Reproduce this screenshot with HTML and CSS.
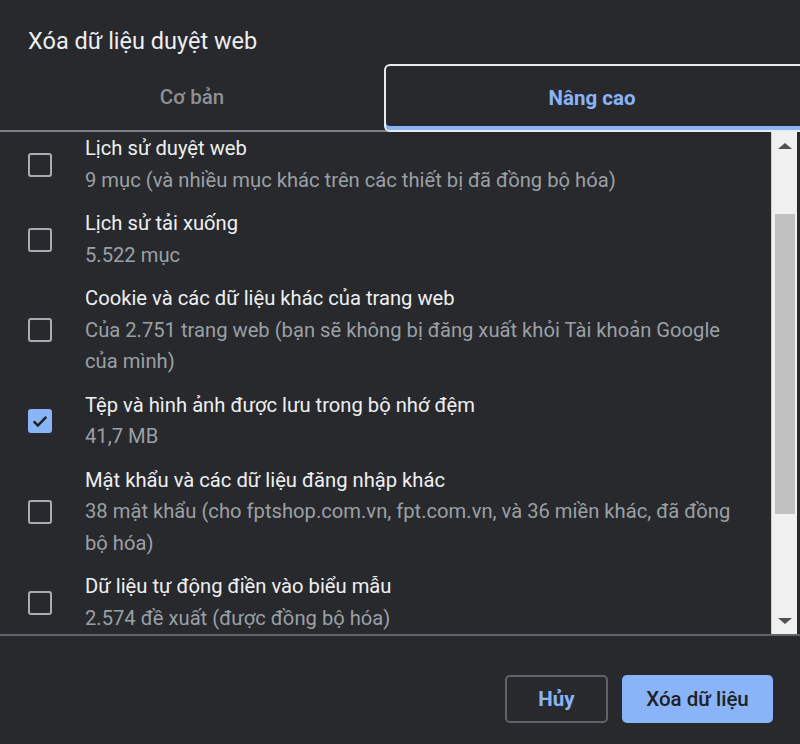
FILE: index.html
```html
<!DOCTYPE html>
<html lang="vi">
<head>
<meta charset="utf-8">
<link rel="stylesheet" href="styles.css">
</head>
<body>
<div class="dialog">
  <h1 class="title">Xóa dữ liệu duyệt web</h1>
  <div class="tabs">
    <div class="tab">Cơ bản</div>
    <div class="tab active">Nâng cao</div>
  </div>
  <div class="body">
    <div class="list">
      <div class="item">
        <span class="box"></span>
        <div class="txt"><div class="t">Lịch sử duyệt web</div><div class="s">9 mục (và nhiều mục khác trên các thiết bị đã đồng bộ hóa)</div></div>
      </div>
      <div class="item">
        <span class="box"></span>
        <div class="txt"><div class="t">Lịch sử tải xuống</div><div class="s">5.522 mục</div></div>
      </div>
      <div class="item">
        <span class="box"></span>
        <div class="txt"><div class="t">Cookie và các dữ liệu khác của trang web</div><div class="s">Của 2.751 trang web (bạn sẽ không bị đăng xuất khỏi Tài khoản Google của mình)</div></div>
      </div>
      <div class="item">
        <span class="box checked"><svg viewBox="0 0 24 24" width="20" height="20"><path d="M4.5 12.5l5 5L19.5 7" fill="none" stroke="#202124" stroke-width="3"/></svg></span>
        <div class="txt"><div class="t">Tệp và hình ảnh được lưu trong bộ nhớ đệm</div><div class="s">41,7 MB</div></div>
      </div>
      <div class="item">
        <span class="box"></span>
        <div class="txt"><div class="t">Mật khẩu và các dữ liệu đăng nhập khác</div><div class="s">38 mật khẩu (cho fptshop.com.vn, fpt.com.vn, và 36 miền khác, đã đồng bộ hóa)</div></div>
      </div>
      <div class="item">
        <span class="box"></span>
        <div class="txt"><div class="t">Dữ liệu tự động điền vào biểu mẫu</div><div class="s">2.574 đề xuất (được đồng bộ hóa)</div></div>
      </div>
    </div>
    <div class="scrollbar">
      <span class="arrow up"></span>
      <div class="track"><div class="thumb"></div></div>
      <span class="arrow down"></span>
    </div>
  </div>
  <div class="footer">
    <button class="btn cancel">Hủy</button>
    <button class="btn primary">Xóa dữ liệu</button>
  </div>
</div>
</body>
</html>
```
FILE: styles.css
```css
html, body {
  margin: 0;
  padding: 0;
  background: #28292c;
  overflow: hidden;
}
.dialog {
  width: 800px;
  height: 744px;
  font-family: Roboto, "Noto Sans", sans-serif;
  color: #e8eaed;
  display: flex;
  flex-direction: column;
  overflow: hidden;
}
.title {
  margin: 0;
  padding: 27px 0 0 28px;
  font-size: 23.5px;
  line-height: 28px;
  font-weight: 400;
  color: #eceef1;
}
.tabs {
  margin-top: 9px;
  display: flex;
  height: 66px;
  border-bottom: 2px solid #7d8084;
}
.tab {
  width: 384px;
  display: flex;
  align-items: center;
  justify-content: center;
  font-size: 20.5px;
  font-weight: 500;
  color: #8d9196;
  padding-bottom: 1px;
}
.tab.active {
  width: auto;
  flex: 1;
  margin-right: -8px;
  margin-bottom: -2px;
  box-sizing: border-box;
  border: 2px solid #e8eaed;
  border-radius: 6px;
  color: #8ab4f8;
  font-weight: 700;
  padding-right: 8px;
  padding-bottom: 0;
  box-shadow: inset 0 -4px 0 #8ab4f8;
}
.body {
  height: 502px;
  display: flex;
  border-bottom: 2px solid #5f6368;
}
.list {
  flex: 1;
  overflow: hidden;
  padding-top: 1px;
}
.item {
  display: flex;
  align-items: center;
  margin-bottom: 12px;
}
.box {
  width: 20px;
  height: 20px;
  margin-left: 28px;
  margin-right: 33px;
  border: 2.5px solid #a9acb0;
  border-radius: 3px;
  flex: none;
  display: flex;
  align-items: center;
  justify-content: center;
}
.box.checked {
  background: #8ab4f8;
  border-color: #8ab4f8;
}
.txt {
  font-size: 20.2px;
  line-height: 31.5px;
  padding-right: 14px;
}
.t {
  color: #eef0f2;
}
.s {
  color: #9aa0a6;
}
.scrollbar {
  width: 25px;
  margin-right: 3px;
  background: #f0f0f0;
  display: flex;
  flex-direction: column;
  align-items: center;
  border-left: 1px solid #cfcfcf;
}
.arrow {
  width: 0;
  height: 0;
  border-left: 7px solid transparent;
  border-right: 7px solid transparent;
  margin: 10px 0;
}
.arrow.up { border-bottom: 6px solid #505050; margin-top: 11px; }
.arrow.down { border-top: 6px solid #505050; margin-bottom: 10px; }
.track {
  flex: 1;
  width: 100%;
  padding-top: 55px;
  box-sizing: border-box;
}
.thumb {
  margin: 0 auto;
  width: 20px;
  height: 300px;
  background: #c1c1c1;
}
.footer {
  flex: 1;
  display: flex;
  justify-content: flex-end;
  align-items: flex-start;
  padding: 39px 27px 0 0;
  gap: 14px;
}
.btn {
  height: 48px;
  border-radius: 5px;
  font-family: Roboto, "Noto Sans", sans-serif;
  font-size: 20.5px;
  font-weight: 500;
  cursor: pointer;
}
.cancel {
  width: 103px;
  background: transparent;
  border: 2px solid #5f6368;
  color: #8ab4f8;
  font-weight: 700;
}
.primary {
  width: 151px;
  background: #8ab4f8;
  border: none;
  color: #202124;
}
```
